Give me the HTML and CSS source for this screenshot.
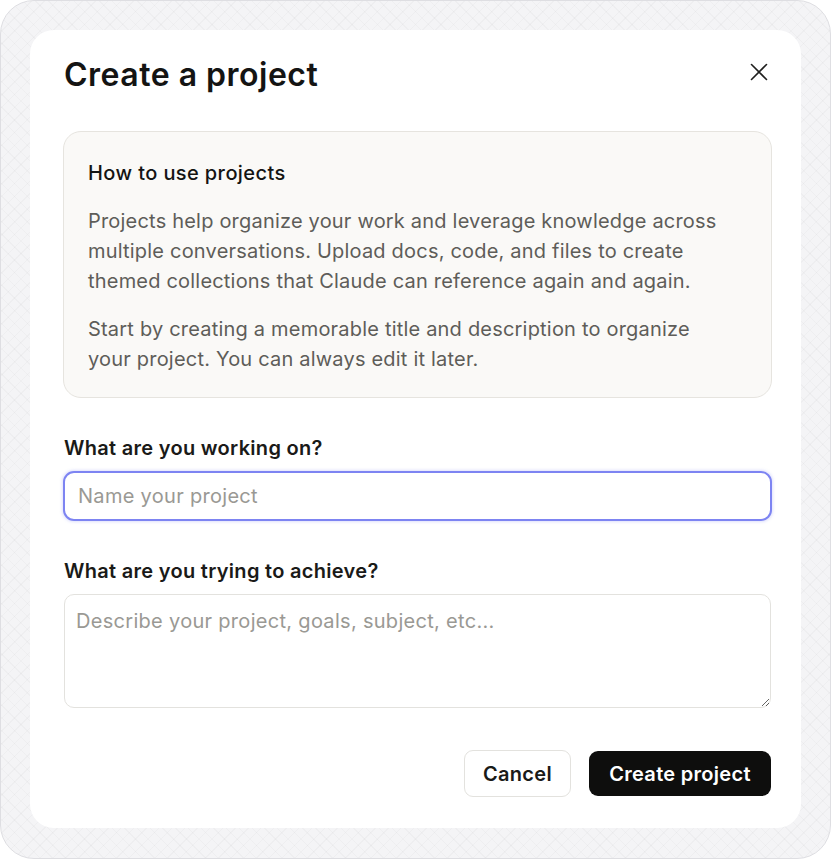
FILE: index.html
```html
<!DOCTYPE html>
<html lang="en">
<head>
  <meta charset="UTF-8" />
  <title>Create a project</title>
  <link rel="stylesheet" href="styles.css">
</head>
<body>

<div class="backdrop">
  <div class="dialog">
    <div class="dialog-head">
      <h1>Create a project</h1>
      <button class="close" aria-label="Close">
        <svg width="20" height="20" viewBox="0 0 20 20"><path d="M2.5 2.5l15 15M17.5 2.5l-15 15" stroke="#1f1f1e" stroke-width="1.6" stroke-linecap="round" fill="none"/></svg>
      </button>
    </div>

    <div class="info">
      <h2>How to use projects</h2>
      <p>Projects help organize your work and leverage knowledge across multiple conversations. Upload docs, code, and files to create themed collections that Claude can reference again and again.</p>
      <p>Start by creating a memorable title and description to organize your project. You can always edit it later.</p>
    </div>

    <label class="field-label" for="project-name">What are you working on?</label>
    <input type="text" id="project-name" class="name-input" placeholder="Name your project" />

    <label class="field-label second" for="project-desc">What are you trying to achieve?</label>
    <textarea id="project-desc" class="desc-input" placeholder="Describe your project, goals, subject, etc..."></textarea>

    <div class="actions">
      <button class="btn btn-cancel">Cancel</button>
      <button class="btn btn-create">Create project</button>
    </div>
  </div>
</div>

</body>
</html>
```

FILE: styles.css
```css
body {
  margin: 0;
  background: #fff;
  font-family: Inter, "Noto Sans", sans-serif;
  color: #1a1a18;
}

.backdrop {
  box-sizing: border-box;
  width: 831px;
  height: 859px;
  padding: 29px 29px 30px 29px;
  border: 1px solid #dedee2;
  border-radius: 34px;
  background-color: #f4f4f6;
  background-image:
    repeating-linear-gradient(45deg, rgba(0, 0, 0, 0.022) 0 1px, transparent 1px 9px),
    repeating-linear-gradient(-45deg, rgba(0, 0, 0, 0.022) 0 1px, transparent 1px 9px);
}

.dialog {
  box-sizing: border-box;
  height: 798px;
  padding: 0 29px 0 33px;
  border-radius: 24px;
  background: #fff;
  display: flex;
  flex-direction: column;
}

.dialog-head {
  display: flex;
  justify-content: space-between;
  align-items: center;
  height: 90px;
  margin-bottom: 11px;
}

.dialog-head h1 {
  margin: 0;
  padding-left: 1px;
  padding-bottom: 2px;
  font-size: 32px;
  font-weight: 600;
  letter-spacing: 0.5px;
  color: #141413;
}

.close {
  border: none;
  background: none;
  padding: 0;
  margin-right: 3px;
  margin-bottom: 6px;
  width: 20px;
  height: 20px;
  cursor: pointer;
}

.info {
  box-sizing: border-box;
  height: 267px;
  padding: 26px 36px 0 24px;
  border: 1px solid #e6e4df;
  border-radius: 18px;
  background: #faf9f7;
}

.info h2 {
  margin: 0 0 18px;
  font-size: 20px;
  font-weight: 500;
  letter-spacing: 0.4px;
  color: #141413;
  line-height: 30px;
}

.info p {
  margin: 0 0 18px;
  font-size: 20px;
  letter-spacing: 0.2px;
  line-height: 30px;
  color: #5e5d59;
}

.field-label {
  display: block;
  margin: 36px 0 9px 1px;
  font-size: 20px;
  font-weight: 600;
  letter-spacing: 0.3px;
  line-height: 28px;
  color: #1a1a18;
}

.field-label.second {
  margin-top: 36px;
}

.name-input,
.desc-input {
  box-sizing: border-box;
  width: 100%;
  font-family: inherit;
  font-size: 20px;
  letter-spacing: 0.3px;
  color: #1a1a18;
  background: #fff;
  outline: none;
}

.name-input {
  height: 50px;
  padding: 0 13px;
  border: 2px solid #7d84f2;
  border-radius: 11px;
  box-shadow: 0 0 3px 1px rgba(125, 132, 242, 0.25);
}

.desc-input {
  height: 114px;
  margin-left: 1px;
  width: 707px;
  padding: 12px 11px;
  border: 1px solid #e3e2de;
  border-radius: 10px;
  line-height: 28px;
  resize: vertical;
}

.name-input::placeholder,
.desc-input::placeholder {
  color: #9a9994;
}

.actions {
  display: flex;
  justify-content: flex-end;
  gap: 18px;
  margin-top: 42px;
  padding-right: 1px;
}

.btn {
  font-family: inherit;
  font-size: 20px;
  font-weight: 600;
  letter-spacing: 0.3px;
  height: 47px;
  border-radius: 9px;
  cursor: pointer;
}

.btn-cancel {
  width: 107px;
  background: #fff;
  color: #1a1a18;
  border: 1px solid #e3e2de;
}

.btn-create {
  width: 182px;
  height: 45px;
  margin-top: 1px;
  background: #0e0e0d;
  color: #fff;
  border: none;
}
```
